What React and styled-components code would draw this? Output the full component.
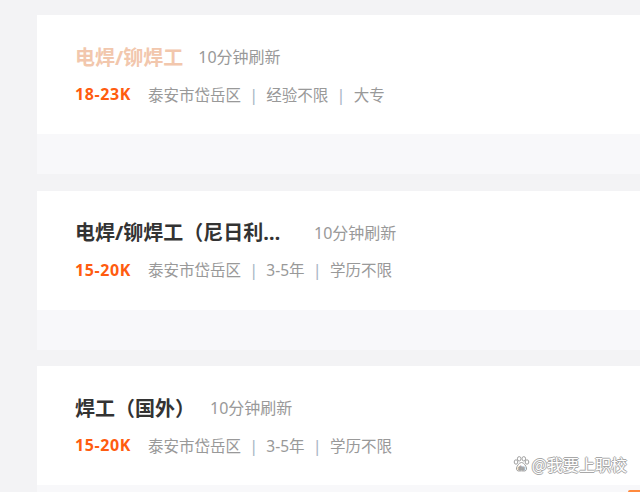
import React from 'react';
import styled, { createGlobalStyle } from 'styled-components';

const GlobalStyle = createGlobalStyle`
  html, body {
    margin: 0;
    padding: 0;
    background: #f3f3f5;
    font-family: "Noto Sans", "Noto Sans CJK SC", sans-serif;
  }
`;

const Page = styled.div`
  position: relative;
  width: 640px;
  height: 492px;
  overflow: hidden;
  background: #f3f3f5;
  padding: 15px 0 0 37px;
  box-sizing: border-box;
  display: flex;
  flex-direction: column;
  gap: 16.5px;
`;

const Card = styled.div`
  display: flex;
  flex-direction: column;
  flex-shrink: 0;
`;

const Body = styled.div`
  background: #fff;
  height: 119px;
  box-sizing: border-box;
  padding: 27px 0 0 38px;
`;

const Footer = styled.div`
  background: #f8f8fa;
  height: 40px;
`;

const TitleRow = styled.div`
  display: flex;
  align-items: center;
  gap: 15px;
  height: 28px;
`;

const Title = styled.div`
  font-size: 20px;
  font-weight: 700;
  color: ${({ $visited }) => ($visited ? '#f2c7ad' : '#333')};
  max-width: 224px;
  white-space: nowrap;
  overflow: hidden;
  text-overflow: ellipsis;
`;

const Refresh = styled.span`
  font-size: 16px;
  color: #999;
`;

const Meta = styled.div`
  display: flex;
  align-items: center;
  height: 22px;
  margin-top: 13px;
  font-size: 15.5px;
  color: #999;
`;

const Salary = styled.span`
  color: #ff5c10;
  font-size: 16px;
  font-weight: 700;
  letter-spacing: 0.6px;
  margin-right: 17px;
`;

const Sep = styled.span`
  color: #a9b6c6;
  font-size: 17px;
  margin: 0 8px;
`;

const Watermark = styled.div`
  position: absolute;
  right: 13px;
  bottom: 16px;
  display: flex;
  align-items: center;
  gap: 2px;
  font-size: 16px;
  color: #fff;
  text-shadow: 1px 0 0 #a8a8a8, -1px 0 0 #a8a8a8, 0 1px 0 #a8a8a8, 0 -1px 0 #a8a8a8;
  font-family: "Noto Sans CJK SC", sans-serif;
`;

const Corner = styled.div`
  position: absolute;
  right: 0;
  bottom: 0;
  width: 12px;
  height: 2px;
  background: #ff8a3d;
  border-top-left-radius: 2px;
`;

const Paw = () => (
  <svg width="17" height="16" viewBox="0 0 17 16">
    <g fill="#fff" stroke="#a0a0a0" strokeWidth="1">
      <ellipse cx="3" cy="6" rx="1.8" ry="2.2" />
      <ellipse cx="6.2" cy="2.8" rx="1.8" ry="2.2" />
      <ellipse cx="10.8" cy="2.8" rx="1.8" ry="2.2" />
      <ellipse cx="14" cy="6" rx="1.8" ry="2.2" />
      <path d="M8.5 6.5 C6 6.5 4 10 3.5 12 C3 14 4.5 15.3 6.5 15 C7.5 14.8 9.5 14.8 10.5 15 C12.5 15.3 14 14 13.5 12 C13 10 11 6.5 8.5 6.5 Z" />
    </g>
    <text x="8.5" y="13.6" textAnchor="middle" fontSize="4.5" fill="#a0a0a0" fontFamily="Noto Sans, sans-serif" fontWeight="700">du</text>
  </svg>
);

const jobs = [
  { title: '电焊/铆焊工', visited: true, salary: '18-23K', tags: ['泰安市岱岳区', '经验不限', '大专'] },
  { title: '电焊/铆焊工（尼日利亚）', salary: '15-20K', tags: ['泰安市岱岳区', '3-5年', '学历不限'] },
  { title: '焊工（国外）', salary: '15-20K', tags: ['泰安市岱岳区', '3-5年', '学历不限'] },
];

export default function App() {
  return (
    <>
      <GlobalStyle />
      <Page>
        {jobs.map((job, i) => (
          <Card key={i}>
            <Body>
              <TitleRow>
                <Title $visited={job.visited}>{job.title}</Title>
                <Refresh>10分钟刷新</Refresh>
              </TitleRow>
              <Meta>
                <Salary>{job.salary}</Salary>
                {job.tags.map((t, j) => (
                  <React.Fragment key={j}>
                    {j > 0 && <Sep>|</Sep>}
                    <span>{t}</span>
                  </React.Fragment>
                ))}
              </Meta>
            </Body>
            <Footer />
          </Card>
        ))}
        <Watermark>
          <Paw />
          <span>@我要上职校</span>
        </Watermark>
        <Corner />
      </Page>
    </>
  );
}
